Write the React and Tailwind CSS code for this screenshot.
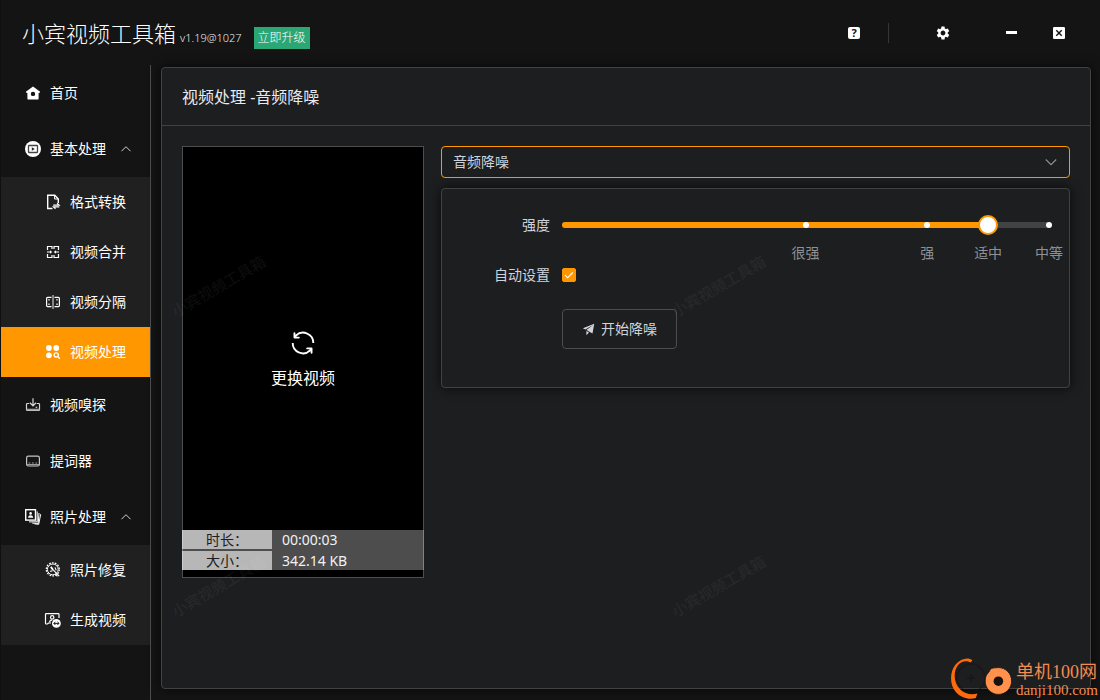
import React, { useState } from 'react';
import { MdSettings } from 'react-icons/md';

const HomeIcon = () => (
  <svg viewBox="0 0 18 18" className="w-[18px] h-[18px]" fill="currentColor" fillRule="evenodd">
    <path d="M9 2.4 15.8 7.600a.6.6 0 0 1-.3 1.100l-.9.2v5.500a1.200 1.200 0 0 1-1.200 1.200H4.600a1.200 1.200 0 0 1-1.200-1.200V8.900l-.9-.2a.6.6 0 0 1-.3-1.100zM9 7.700a2.200 2.200 0 1 0 0 4.400 2.200 2.200 0 0 0 0-4.400z" />
  </svg>
);

const BasicIcon = () => (
  <svg viewBox="0 0 18 18" className="w-[18px] h-[18px]">
    <circle cx="9" cy="9" r="8" fill="currentColor" />
    <rect x="4.5" y="5.5" width="9" height="7" rx="0.5" fill="none" stroke="#444" strokeWidth="1.3" />
    <path d="M7.800 7.200v3.600L10.800 9z" fill="#222" />
  </svg>
);

const FormatIcon = () => (
  <svg viewBox="0 0 18 18" className="w-[18px] h-[18px]" fill="none" stroke="currentColor" strokeWidth="1.4">
    <path d="M8.5 15.5H3.7V2.2h7.1L14.3 6v4" />
    <path d="M10.6 2.4V6h3.6" strokeWidth="1" />
    <path d="M9.2 12.1h5.9l-2-1.9M15.3 13.8H9.5l2 1.9" strokeWidth="1.2" />
  </svg>
);

const MergeIcon = () => (
  <svg viewBox="0 0 18 18" className="w-[18px] h-[18px]" fill="none" stroke="currentColor" strokeWidth="1.2">
    <path d="M3.5 7V3.500h4.500V6M14.500 7V3.500H10V6M3.500 11v3.500h4.500V12M14.500 11v3.500H10V12" />
    <path d="M3 9h4.500M15 9h-4.500" strokeWidth="1.200" />
    <path d="M6 7.200 8 9l-2 1.800zM12 7.200 10 9l2 1.800z" fill="currentColor" stroke="none" />
  </svg>
);

const SplitIcon = () => (
  <svg viewBox="0 0 18 18" className="w-[18px] h-[18px]" fill="none" stroke="currentColor" strokeWidth="1.2">
    <path d="M7.5 4.4H3.6a1 1 0 0 0-1 1v7.2a1 1 0 0 0 1 1h3.9M10.5 4.4h3.9a1 1 0 0 1 1 1v7.2a1 1 0 0 1-1 1h-3.9" />
    <path d="M9 2v14" stroke="#a0a0a0" strokeWidth="1.6" />
    <path d="M5 6v1.6M5 10.4V12M13 6v1.6M13 10.4V12" />
  </svg>
);

const ProcessIcon = () => (
  <svg viewBox="0 0 18 18" className="w-[18px] h-[18px]" fill="currentColor">
    <circle cx="4.9" cy="5" r="2.9" />
    <circle cx="12.2" cy="5" r="2.9" />
    <circle cx="4.9" cy="12.3" r="2.9" />
    <circle cx="12.2" cy="11.9" r="2.1" fill="none" stroke="currentColor" strokeWidth="1.3" />
    <path d="m13.8 13.6 2 2.2" stroke="currentColor" strokeWidth="1.4" />
  </svg>
);

const SniffIcon = () => (
  <svg viewBox="0 0 18 18" className="w-[18px] h-[18px]" fill="none" stroke="#d5d5d5" strokeWidth="1.2">
    <path d="M5.2 7.5H3.4a.9.9 0 0 0-.9.9v5.2c0 .5.4.9.9.9h11.2c.5 0 .9-.4.9-.9V8.4a.9.9 0 0 0-.9-.9h-1.800" />
    <path d="M9 2.2v7.4M5.9 6.8 9 9.8l3.1-3" />
    <path d="M2.6 13.6h12.8" stroke="#a0a0a0" strokeWidth="1.800" />
    <path d="M11.6 11.3h1.6" />
  </svg>
);

const PrompterIcon = () => (
  <svg viewBox="0 0 18 18" className="w-[18px] h-[18px]" fill="none" stroke="#c4c4c4" strokeWidth="1.2">
    <rect x="2.6" y="4.2" width="12.8" height="9.8" rx="1.8" />
    <path d="M3 12.600h12M4.600 11h1.800M8 11h1.800M11.400 11h1.800" stroke="#9a9a9a" />
  </svg>
);

const PhotoIcon = () => (
  <svg viewBox="0 0 18 18" className="w-[18px] h-[18px]" fill="none" stroke="currentColor" strokeWidth="1.4">
    <rect x="1.7" y="1.7" width="9.8" height="10.4" />
    <circle cx="6.6" cy="5.4" r="1.3" fill="currentColor" stroke="none" />
    <path d="M4 9.8c.2-1.9 1.2-2.6 2.6-2.6s2.4.7 2.6 2.6z" fill="currentColor" stroke="none" />
    <path d="M13.200 3.400v10.400l-8.200.1M15 5l-.8 10.400-6-.3M16.700 6.200l-2 10.100-4.200-.4" strokeWidth="1" />
  </svg>
);

const RepairIcon = () => (
  <svg viewBox="0 0 18 18" className="w-[18px] h-[18px]" fill="none" stroke="currentColor">
    <circle cx="8.8" cy="8.4" r="6.500" strokeWidth="1.300" strokeDasharray="1.7 1.2" />
    <circle cx="8.8" cy="8.4" r="5.4" strokeWidth="1" />
    <path d="m8 7.600 7.200 7.600M6.200 10.400l2.400-.6M11 6.400l1.200 3M11.400 13l2 2.400" strokeWidth="1.100" />
    <path d="m6.800 5.800 2 2.800" strokeWidth="1.800" />
  </svg>
);

const GenerateIcon = () => (
  <svg viewBox="0 0 18 18" className="w-[18px] h-[18px]" fill="none" stroke="currentColor" strokeWidth="1.2">
    <path d="M7 12H4.6L3.4 13H2.3a.8.8 0 0 1-.8-.8V3.4c0-.4.4-.8.8-.8h11.9c.4 0 .8.4.8.8V7" />
    <circle cx="8.2" cy="6.4" r="1.7" />
    <path d="M5.4 11.4c.2-1.7 1-2.4 2.6-2.6" />
    <circle cx="12.4" cy="12.4" r="4.4" fill="currentColor" stroke="none" />
    <path d="M9.8 12.4h5.2M11.4 10.8l-1.6 1.6 1.6 1.6M13.4 10.8l1.6 1.6-1.6 1.6" stroke="#202020" strokeWidth="1" />
  </svg>
);

const RefreshIcon = () => (
  <svg viewBox="0 0 1024 1024" className="w-[30px] h-[30px]" fill="currentColor">
    <path d="M771.776 794.88A384 384 0 0 1 128 512h64a320 320 0 0 0 555.712 216.448H654.72a32 32 0 1 1 0-64h149.056a32 32 0 0 1 32 32v148.928a32 32 0 1 1-64 0v-50.56zM276.288 295.616h92.992a32 32 0 0 1 0 64H220.16a32 32 0 0 1-32-32V178.56a32 32 0 0 1 64 0v50.56A384 384 0 0 1 896.128 512h-64a320 320 0 0 0-555.776-216.384z" />
  </svg>
);

const SendIcon = () => (
  <svg viewBox="0 0 1024 1024" className="w-[14px] h-[14px]" fill="currentColor">
    <path d="m64 448 832-320-128 704-446.08-243.328L832 192 242.816 545.536 64 448zm256 512V657.024L512 768 320 960z" />
  </svg>
);

const CloseIcon = () => (
  <svg viewBox="0 0 12 12" className="w-3 h-3">
    <rect width="12" height="12" rx="1.200" fill="currentColor" />
    <path d="m3.300 3.300 5.400 5.400M8.700 3.300 3.300 8.700" stroke="#141414" strokeWidth="1.400" />
  </svg>
);

const UpIcon = () => (
  <svg viewBox="0 0 12 12" className="w-3 h-3" fill="none" stroke="#d0d0d0">
    <path d="M1.500 8.200 6 3.700l4.500 4.500" />
  </svg>
);

const DownIcon = ({ className }) => (
  <svg viewBox="0 0 14 14" className={className} fill="none" stroke="currentColor" strokeWidth="1.100">
    <path d="M1.800 4.500 7 9.700l5.200-5.200" />
  </svg>
);

const menu = [
  { label: '首页', icon: HomeIcon },
  {
    label: '基本处理',
    icon: BasicIcon,
    children: [
      { label: '格式转换', icon: FormatIcon },
      { label: '视频合并', icon: MergeIcon },
      { label: '视频分隔', icon: SplitIcon },
      { label: '视频处理', icon: ProcessIcon },
    ],
  },
  { label: '视频嗅探', icon: SniffIcon },
  { label: '提词器', icon: PrompterIcon },
  {
    label: '照片处理',
    icon: PhotoIcon,
    children: [
      { label: '照片修复', icon: RepairIcon },
      { label: '生成视频', icon: GenerateIcon },
    ],
  },
];

const marks = [
  { at: 50, label: '很强' },
  { at: 75, label: '强' },
  { at: 87.5, label: '适中' },
  { at: 100, label: '中等' },
];

const Header = () => (
  <header className="flex items-center h-[65px] pl-[21px] pr-[31px] text-white">
    <div className="flex items-baseline flex-1">
      <h1 className="text-[22px] leading-8 font-light">小宾视频工具箱</h1>
      <span className="ml-1 text-[11px] font-light text-[#e8e8e8]">v1.19@1027</span>
      <button className="ml-3 px-1 h-[22px] text-xs leading-[22px] font-light bg-[#2ba776]">立即升级</button>
    </div>
    <button aria-label="帮助" className="w-5 h-5 flex items-center justify-center">
      <span className="w-3 h-3 rounded-xs bg-white text-[#141414] text-[11px] leading-3 font-bold">?</span>
    </button>
    <span className="ml-6 w-px h-5 bg-[#363637]" />
    <button aria-label="设置" className="ml-11 w-5 h-5 flex items-center justify-center">
      <MdSettings className="w-4 h-4" />
    </button>
    <button aria-label="最小化" className="ml-12 w-5 h-5 flex items-center justify-center">
      <span className="w-[11px] h-[3px] bg-white" />
    </button>
    <button aria-label="关闭" className="ml-7 w-5 h-5 flex items-center justify-center">
      <CloseIcon />
    </button>
  </header>
);

const Sidebar = ({ active, onSelect }) => {
  const [closed, setClosed] = useState({});

  return (
    <nav className="w-[150px] shrink-0 border-r border-[#4c4d4f] text-sm text-white">
      <ul>
        {menu.map(({ label, icon: Icon, children }) => (
          <li key={label}>
            <button
              onClick={() => (children ? setClosed({ ...closed, [label]: !closed[label] }) : onSelect(label))}
              className="w-full h-14 pl-[23px] pr-[18px] flex items-center gap-2"
            >
              <Icon />
              <span className="flex-1 text-left">{label}</span>
              {children && <UpIcon />}
            </button>
            {children && !closed[label] && (
              <ul className="bg-[#202020]">
                {children.map(({ label: name, icon: SubIcon }) => (
                  <li key={name}>
                    <button
                      onClick={() => onSelect(name)}
                      className={`w-full h-[50px] pl-[43px] flex items-center gap-2 ${active === name ? 'bg-[#ff9800]' : ''}`}
                    >
                      <SubIcon />
                      <span>{name}</span>
                    </button>
                  </li>
                ))}
              </ul>
            )}
          </li>
        ))}
      </ul>
    </nav>
  );
};

const VideoPreview = () => (
  <div className="grid w-[242px] h-[432px] shrink-0 bg-black border border-[#4c4d4f]">
    <button className="col-start-1 row-start-1 pb-1.5 flex flex-col items-center justify-center gap-2 text-white">
      <RefreshIcon />
      <span className="text-base leading-6">更换视频</span>
    </button>
    <dl className="col-start-1 row-start-1 self-end -mx-px mb-[7px] grid grid-cols-[90px_1fr] gap-y-0.5 bg-white/30 text-sm leading-[19px]">
      <dt className="text-center text-[#1d1e1f] bg-white/60">时长：</dt>
      <dd className="pl-2.5 text-[#f0f2f5]">00:00:03</dd>
      <dt className="text-center text-[#1d1e1f] bg-white/60">大小：</dt>
      <dd className="pl-2.5 text-[#f0f2f5]">342.14 KB</dd>
    </dl>
  </div>
);

const StrengthSlider = ({ value, onChange }) => (
  <div className="relative flex-1 flex items-center h-8">
    <div className="w-full h-1.5 rounded-full bg-[#414243]">
      <div className="h-full rounded-full bg-[#ff9800]" style={{ width: `${value}%` }} />
    </div>
    {marks.map(({ at, label }) => (
      <React.Fragment key={label}>
        <span className="absolute w-1.5 h-1.5 rounded-full bg-white -translate-x-1/2" style={{ left: `${at}%` }} />
        <span
          className="absolute top-[34px] leading-5 text-[#8d9095] whitespace-nowrap -translate-x-1/2"
          style={{ left: `${at}%` }}
        >
          {label}
        </span>
      </React.Fragment>
    ))}
    {/* wider than the track by one thumb, so the thumb centre lands on the marks */}
    <input
      id="strength"
      type="range"
      min="0"
      max="100"
      step="0.5"
      value={value}
      onChange={(e) => onChange(Number(e.target.value))}
      className="absolute -inset-x-2.5 top-1.5 h-5 appearance-none bg-transparent cursor-pointer [&::-webkit-slider-thumb]:appearance-none [&::-webkit-slider-thumb]:w-5 [&::-webkit-slider-thumb]:h-5 [&::-webkit-slider-thumb]:rounded-full [&::-webkit-slider-thumb]:bg-white [&::-webkit-slider-thumb]:border-2 [&::-webkit-slider-thumb]:border-solid [&::-webkit-slider-thumb]:border-[#ff9800]"
    />
  </div>
);

const DenoiseForm = () => {
  const [strength, setStrength] = useState(87.5);
  const [auto, setAuto] = useState(true);

  return (
    <form
      onSubmit={(e) => e.preventDefault()}
      className="flex flex-col gap-[18px] p-5 pb-[38px] border border-[#414243] rounded shadow-[0_0_12px_rgba(0,0,0,0.72)] text-sm text-[#cfd3dc]"
    >
      <div className="flex items-center gap-3">
        <label htmlFor="strength" className="w-[88px] text-right">强度</label>
        <StrengthSlider value={strength} onChange={setStrength} />
      </div>
      <div className="flex items-center gap-3 h-8">
        <label htmlFor="auto" className="w-[88px] text-right">自动设置</label>
        <span className="grid w-3.5 h-3.5">
          <input
            id="auto"
            type="checkbox"
            checked={auto}
            onChange={(e) => setAuto(e.target.checked)}
            className="col-start-1 row-start-1 w-3.5 h-3.5 appearance-none rounded-xs border border-[#4c4d4f] checked:bg-[#ff9800] checked:border-[#ff9800]"
          />
          {auto && (
            <svg viewBox="0 0 14 14" className="col-start-1 row-start-1 pointer-events-none" fill="none" stroke="#fff" strokeWidth="1.1">
              <path d="m3 7.2 2.6 2.6 5.2-5.3" />
            </svg>
          )}
        </span>
      </div>
      <div className="pl-[100px]">
        <button
          type="submit"
          className="flex items-center gap-[5px] h-10 px-[19px] border border-[#4c4d4f] rounded text-sm"
        >
          <SendIcon />
          <span>开始降噪</span>
        </button>
      </div>
    </form>
  );
};

const Watermarks = () => (
  <div aria-hidden="true" className="absolute inset-0 overflow-hidden pointer-events-none text-[15px] leading-6 text-white/[0.05]">
    <span className="absolute left-1 top-[206px] -rotate-30 whitespace-nowrap">小宾视频工具箱</span>
    <span className="absolute left-[504px] top-[206px] -rotate-30 whitespace-nowrap">小宾视频工具箱</span>
    <span className="absolute left-1 top-[506px] -rotate-30 whitespace-nowrap">小宾视频工具箱</span>
    <span className="absolute left-[504px] top-[506px] -rotate-30 whitespace-nowrap">小宾视频工具箱</span>
  </div>
);

const SiteBadge = () => (
  <div className="absolute right-0.5 bottom-0 flex items-end gap-0.5 text-[#f58b4c] pointer-events-none">
    <svg viewBox="0 0 64 44" className="w-16 h-11">
      <circle cx="21" cy="22" r="14" fill="none" stroke="#17120f" strokeOpacity="0.5" strokeWidth="1.500" />
      <path d="M21 18v8M17 22h8" stroke="#17120f" strokeOpacity="0.6" strokeWidth="1.500" />
      <path d="M22.4 4.2C18.2.8 10.4 2.6 5.6 8.4-.4 15.8-.6 28.4 5.8 36c5 5.8 13.6 8.2 20 6l1.6-4.4c-6 1.6-12.6.4-17.4-4.4C3.6 26.8 3 15.6 8 9.2c3.2-4 8.4-5.4 12.6-2.6z" fill="#ff6a0b" />
      <path d="M48.400 11.600c7.400 0 13.200 6 13.200 13.400s-5.800 13.400-13.200 13.400S35.200 32.400 35.200 25c0-4.200 1.200-6.400 3.400-8.600l2.400-4c2.200-.4 4.800-.8 7.400-.8z" fill="#ff914d" stroke="#17120f" strokeWidth="0.8" />
      <circle cx="48.400" cy="25.200" r="4.800" fill="#17120f" />
    </svg>
    <div className="pb-0.5 font-['Liberation_Serif','Noto_Sans_CJK_SC',serif]">
      <p className="text-lg leading-5">单机100网</p>
      <p className="text-[15px] leading-4">danji100.com</p>
    </div>
  </div>
);

const App = () => {
  const [active, setActive] = useState('视频处理');

  return (
    <div className="relative min-h-screen flex flex-col bg-[#141414] border-l border-[#101010] font-['Noto_Sans','Noto_Sans_CJK_SC',sans-serif]">
      <Header />
      <div className="flex-1 flex">
        <Sidebar active={active} onSelect={setActive} />
        <main className="flex-1 flex pt-0.5 pl-2.5 pr-[9px] pb-[11px]">
          <section className="relative flex-1 bg-[#1d1e20] border border-[#414243] rounded shadow-[0_0_12px_rgba(0,0,0,0.72)]">
            <h2 className="h-[58px] px-5 flex items-center text-base text-[#e5eaf3] border-b border-[#414243]">
              视频处理 -音频降噪
            </h2>
            <div className="flex items-start gap-[17px] p-5">
              <VideoPreview />
              <div className="flex-1 flex flex-col gap-2.5">
                <div className="grid items-center">
                  <select
                    aria-label="处理类型"
                    className="col-start-1 row-start-1 h-8 px-[11px] appearance-none bg-transparent border border-[#ff9800] rounded text-sm text-[#cfd3dc] outline-none"
                  >
                    <option>音频降噪</option>
                  </select>
                  <DownIcon className="col-start-1 row-start-1 justify-self-end mr-3 w-3.5 h-3.5 text-[#8d9095] pointer-events-none" />
                </div>
                <DenoiseForm />
              </div>
            </div>
            <Watermarks />
          </section>
        </main>
      </div>
      <SiteBadge />
    </div>
  );
};

export default App;
